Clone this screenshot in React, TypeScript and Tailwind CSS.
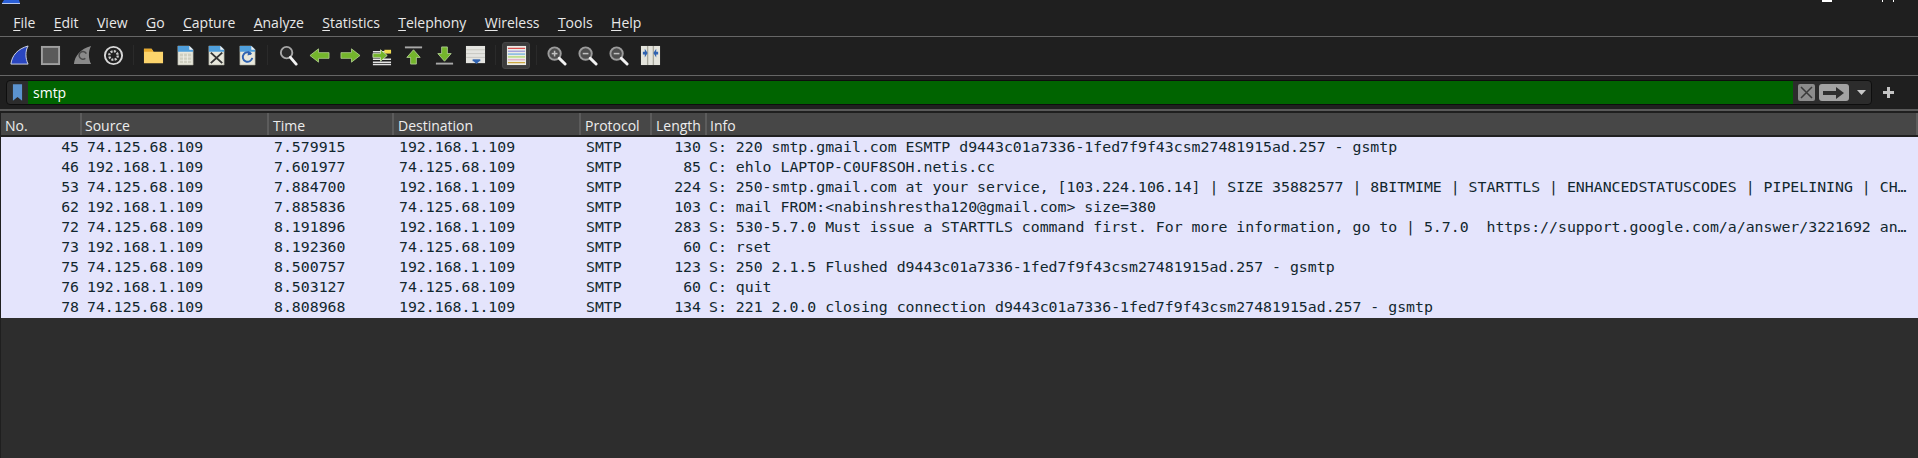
import React from 'react';

const sans = "font-['Open_Sans','Noto_Sans',sans-serif]";
const mono = "font-['DejaVu_Sans_Mono',monospace]";

interface Packet {
  no: number;
  source: string;
  time: string;
  destination: string;
  length: number;
  info: string;
}

const packets: Packet[] = [
  { no: 45, source: '74.125.68.109', time: '7.579915', destination: '192.168.1.109', length: 130, info: 'S: 220 smtp.gmail.com ESMTP d9443c01a7336-1fed7f9f43csm27481915ad.257 - gsmtp' },
  { no: 46, source: '192.168.1.109', time: '7.601977', destination: '74.125.68.109', length: 85, info: 'C: ehlo LAPTOP-C0UF8SOH.netis.cc' },
  { no: 53, source: '74.125.68.109', time: '7.884700', destination: '192.168.1.109', length: 224, info: 'S: 250-smtp.gmail.com at your service, [103.224.106.14] | SIZE 35882577 | 8BITMIME | STARTTLS | ENHANCEDSTATUSCODES | PIPELINING | CH…' },
  { no: 62, source: '192.168.1.109', time: '7.885836', destination: '74.125.68.109', length: 103, info: 'C: mail FROM:<nabinshrestha120@gmail.com> size=380' },
  { no: 72, source: '74.125.68.109', time: '8.191896', destination: '192.168.1.109', length: 283, info: 'S: 530-5.7.0 Must issue a STARTTLS command first. For more information, go to | 5.7.0  https://support.google.com/a/answer/3221692 an…' },
  { no: 73, source: '192.168.1.109', time: '8.192360', destination: '74.125.68.109', length: 60, info: 'C: rset' },
  { no: 75, source: '74.125.68.109', time: '8.500757', destination: '192.168.1.109', length: 123, info: 'S: 250 2.1.5 Flushed d9443c01a7336-1fed7f9f43csm27481915ad.257 - gsmtp' },
  { no: 76, source: '192.168.1.109', time: '8.503127', destination: '74.125.68.109', length: 60, info: 'C: quit' },
  { no: 78, source: '74.125.68.109', time: '8.808968', destination: '192.168.1.109', length: 134, info: 'S: 221 2.0.0 closing connection d9443c01a7336-1fed7f9f43csm27481915ad.257 - gsmtp' },
];

const MenuItem: React.FC<{ hot: string; rest: string }> = ({ hot, rest }) => (
  <span className="px-[9.2px] whitespace-pre">
    <span className="underline underline-offset-2">{hot}</span>
    {rest}
  </span>
);

const Icon: React.FC<{ children: React.ReactNode; active?: boolean }> = ({ children, active }) => (
  <div className="flex w-[31.3px] shrink-0 justify-center">
    <div
      className={`flex h-[27px] w-[28px] items-center justify-center rounded-[3px] ${
        active ? 'border border-[#474747] bg-[#3c3c3c]' : ''
      }`}
    >
      <svg width="21" height="21" viewBox="0 0 22 22">
        {children}
      </svg>
    </div>
  </div>
);

const Sep = () => (
  <div className="flex w-[9px] shrink-0 justify-center">
    <div className="h-[20px] w-px bg-[#2a2a2a]" />
  </div>
);

const Sheet: React.FC<{ children?: React.ReactNode }> = ({ children }) => (
  <>
    <path d="M3 1h12l4 4v16H3z" fill="#e8e8dc" stroke="#9a9a90" strokeWidth="0.6" />
    <path d="M3 1h12l4 4v2H3z" fill="#4f9fdc" />
    <path d="M15 1l4 4h-4z" fill="#f2f2f2" />
    {children}
  </>
);

const Magnifier: React.FC<{ sign?: 'plus' | 'minus' }> = ({ sign }) => (
  <>
    <circle cx="9" cy="9" r="6.5" fill="#4e4e4e" stroke="#9c9c9c" strokeWidth="2" />
    <path d="M14 14l6 6" stroke="#f2f2f2" strokeWidth="3" strokeLinecap="round" />
    {sign && <path d="M6 9h6" stroke="#c0c0c0" strokeWidth="1.6" />}
    {sign === 'plus' && <path d="M9 6v6" stroke="#c0c0c0" strokeWidth="1.6" />}
  </>
);

const Toolbar = () => (
  <div className="flex h-[38px] items-center pb-[2px] pl-[4px]">
    <Icon>
      <path d="M2 20C3 11 9 4 20 1c-3 5-3 13 0 19z" fill="#2a46c0" stroke="#d5d9e8" strokeWidth="1" />
    </Icon>
    <Icon>
      <rect x="2" y="2" width="18" height="18" fill="#5a5a5a" stroke="#a0a0a0" strokeWidth="2" />
    </Icon>
    <Icon>
      <path d="M2 20C3 11 9 4 20 1c-3 5-3 13 0 19z" fill="#8a8a8a" />
      <path d="M15 9a4 4 0 1 0-1 5" fill="none" stroke="#4a4a4a" strokeWidth="1.6" />
    </Icon>
    <Icon>
      <circle cx="11" cy="11" r="9" fill="none" stroke="#d8d8d8" strokeWidth="2" />
      <circle cx="11" cy="11" r="4.5" fill="none" stroke="#c8c8c8" strokeWidth="2.4" strokeDasharray="2.2 1.3" />
    </Icon>
    <Sep />
    <Icon>
      <path d="M1 4h8l2 3h10v12H1z" fill="#fcd46c" />
      <path d="M1 4h8l2 3H1z" fill="#e8a92c" />
    </Icon>
    <Icon>
      <Sheet>
        <path d="M5 9h12v10H5z" fill="#cfcfc0" />
        <path d="M9 9v10M13 9v10M5 12.5h12M5 16h12" stroke="#f2f2e8" strokeWidth="0.8" />
      </Sheet>
    </Icon>
    <Icon>
      <Sheet>
        <path d="M5 8l12 11M17 8L5 19" stroke="#333" strokeWidth="2" />
      </Sheet>
    </Icon>
    <Icon>
      <Sheet>
        <path d="M15 9.5a5 5 0 1 0 1 4" fill="none" stroke="#2f62b0" strokeWidth="2" />
        <path d="M12 6l3 4-4 1z" fill="#2f62b0" />
      </Sheet>
    </Icon>
    <Sep />
    <Icon>
      <circle cx="9" cy="8" r="6" fill="#2a2a2a" stroke="#a8a8a8" strokeWidth="2" />
      <path d="M13 13l6 7" stroke="#f2f2f2" strokeWidth="3" strokeLinecap="round" />
    </Icon>
    <Icon>
      <path d="M1 11l9-7v4h11v6H10v4z" fill="#74b52c" stroke="#b9d894" strokeWidth="0.8" />
    </Icon>
    <Icon>
      <path d="M21 11l-9-7v4H1v6h11v4z" fill="#74b52c" stroke="#b9d894" strokeWidth="0.8" />
    </Icon>
    <Icon>
      <path d="M2 7h19M2 15h19M2 18h19M2 20.5h19" stroke="#e4e4e4" strokeWidth="1.6" />
      <rect x="14" y="5" width="7" height="4" fill="#f0dc50" />
      <path d="M2 9h8V5l7 6-7 6v-4H2z" fill="#74b52c" stroke="#d8e8c4" strokeWidth="0.8" />
    </Icon>
    <Icon>
      <path d="M2 2.5h18" stroke="#a8a8a8" strokeWidth="2" />
      <path d="M11 5l7 8h-4v7H8v-7H4z" fill="#74b52c" stroke="#c0dca0" strokeWidth="0.8" />
    </Icon>
    <Icon>
      <path d="M2 19.5h18" stroke="#a8a8a8" strokeWidth="2" />
      <path d="M11 17l7-8h-4V2H8v7H4z" fill="#74b52c" stroke="#c0dca0" strokeWidth="0.8" />
    </Icon>
    <Icon>
      <path d="M1 1h20v18H1z" fill="#e4e4e0" />
      <path d="M1 5h20M1 9h20M1 13h20" stroke="#c0c0b8" strokeWidth="0.8" />
      <path d="M8 16h8l-4 4z" fill="#2f62b0" />
      <rect x="8" y="15" width="8" height="2" fill="#2f62b0" />
    </Icon>
    <Sep />
    <Icon active>
      <rect x="1" y="1" width="20" height="20" fill="#ecece6" />
      <path d="M2 3.5h18" stroke="#d84040" strokeWidth="1.2" />
      <path d="M2 6.5h18" stroke="#9090d8" strokeWidth="1.2" />
      <path d="M2 9.5h18" stroke="#60a8e0" strokeWidth="1.2" />
      <path d="M2 12.5h18" stroke="#a8d860" strokeWidth="1.2" />
      <path d="M2 15.5h18" stroke="#e0a0c0" strokeWidth="1.2" />
      <path d="M2 18.5h18" stroke="#c8a030" strokeWidth="1.2" />
    </Icon>
    <Sep />
    <Icon>
      <Magnifier sign="plus" />
    </Icon>
    <Icon>
      <Magnifier sign="minus" />
    </Icon>
    <Icon>
      <Magnifier sign="minus" />
    </Icon>
    <Icon>
      <rect x="1" y="1" width="20" height="20" fill="#e4e4dc" />
      <path d="M8 1v20M14 1v20" stroke="#a8a89c" strokeWidth="1.4" />
      <path d="M3 7h2V4l3 4.5L5 13V10H3zM19 7h-2V4l-3 4.5 3 4.5v-3h2z" fill="#2f62b0" />
    </Icon>
  </div>
);

const FilterBar = () => (
  <div className="flex h-[33px] items-center pr-[24px] pl-[6px]">
    <div className="flex h-[25px] flex-1 overflow-hidden rounded-[4px] border border-[#0e0e0e] bg-[#2c2c2c]">
      <div className="flex w-[21px] shrink-0 items-center justify-center">
        <svg width="11" height="17" viewBox="0 0 12 18">
          <path d="M1 0h10v18l-5-4-5 4z" fill="#5b93cf" />
        </svg>
      </div>
      <div className={`flex-1 bg-[#006400] pl-[5px] text-[14px] leading-[23px] text-white ${sans}`}>smtp</div>
      <div className="flex w-[78px] shrink-0 items-center pl-[5px]">
        <div className="flex h-[17px] w-[17px] items-center justify-center rounded-[2px] bg-[#8c8c8c]">
          <svg width="13" height="13" viewBox="0 0 13 13">
            <path d="M1 1l11 11M12 1L1 12" stroke="#3a3a3a" strokeWidth="1.5" />
          </svg>
        </div>
        <div className="ml-[4px] flex h-[17px] w-[30px] items-center justify-center rounded-[3px] bg-[#a2a2a2]">
          <svg width="22" height="12" viewBox="0 0 22 12">
            <path d="M0 4h13V0l8 6-8 6V8H0z" fill="#2e2e2e" />
          </svg>
        </div>
        <svg className="ml-[8px]" width="9" height="5" viewBox="0 0 9 5">
          <path d="M0 0h9L4.5 5z" fill="#c8c8c8" />
        </svg>
      </div>
    </div>
    <svg className="ml-[11px]" width="11" height="11" viewBox="0 0 11 11">
      <path d="M4 0h3v4h4v3H7v4H4V7H0V4h4z" fill="#c4c4c4" />
    </svg>
  </div>
);

const headers = [
  { label: 'No.', width: 'w-[81px]', pad: 'pl-[4px]' },
  { label: 'Source', width: 'w-[187px]', pad: 'pl-[3px]' },
  { label: 'Time', width: 'w-[125px]', pad: 'pl-[4px]' },
  { label: 'Destination', width: 'w-[187px]', pad: 'pl-[4px]' },
  { label: 'Protocol', width: 'w-[71px]', pad: 'pl-[4px]' },
  { label: 'Length', width: 'w-[55px]', pad: 'pl-[4px]' },
  { label: 'Info', width: 'flex-1', pad: 'pl-[3px]' },
];

const PacketHeader = () => (
  <div className={`flex h-[24px] border-b-2 border-[#202020] bg-[#474747] text-[14px] leading-[25px] text-[#ededed] ${sans}`}>
    {headers.map((h) => (
      <div key={h.label} className={`${h.width} ${h.pad} border-r-2 border-[#5c5c5c] whitespace-nowrap`}>
        {h.label}
      </div>
    ))}
  </div>
);

const PacketRow: React.FC<{ packet: Packet }> = ({ packet }) => (
  <div className={`flex h-[20px] text-[14.85px] leading-[20px] whitespace-pre text-[#12272e] ${mono}`}>
    <div className="w-[78px] text-right">{packet.no}</div>
    <div className="w-[188px] pl-[8px]">{packet.source}</div>
    <div className="w-[125px] pl-[7px]">{packet.time}</div>
    <div className="w-[187px] pl-[7px]">{packet.destination}</div>
    <div className="w-[71px] pl-[7px]">SMTP</div>
    <div className="w-[51px] text-right">{packet.length}</div>
    <div className="min-w-0 flex-1 overflow-hidden pl-[8px]">{packet.info}</div>
  </div>
);

export default function App() {
  return (
    <div className="flex h-[458px] w-[1918px] flex-col overflow-hidden bg-[#1f1f1f]">
      <div className="flex h-[37px] shrink-0 flex-col border-b border-[#666666]">
        <div className={`flex h-[10px] shrink-0 items-start overflow-hidden text-[14px] leading-[14px] text-white ${sans}`}>
          <svg className="ml-[2px] shrink-0" width="18" height="4" viewBox="0 0 18 4">
            <path d="M2 0h15l1 3H0z" fill="#2a5fd8" />
            <path d="M0 3h18v1H0z" fill="#b8c8ec" />
          </svg>
          <span className="mt-[-12px] ml-[17px]">Wi-Fi</span>
          <div className="mt-0 ml-auto h-[2px] w-[10px] bg-white" />
          <div className="ml-[50px] flex w-[12px] justify-between">
            <div className="h-[2px] w-px bg-white" />
            <div className="h-[2px] w-px bg-white" />
          </div>
          <div className="w-[24px] shrink-0" />
        </div>
        <div className={`flex h-[26px] items-center pb-[1px] pl-[4px] text-[14px] text-[#e8e8e8] ${sans}`}>
          <MenuItem hot="F" rest="ile" />
          <MenuItem hot="E" rest="dit" />
          <MenuItem hot="V" rest="iew" />
          <MenuItem hot="G" rest="o" />
          <MenuItem hot="C" rest="apture" />
          <MenuItem hot="A" rest="nalyze" />
          <MenuItem hot="S" rest="tatistics" />
          <MenuItem hot="T" rest="elephony" />
          <MenuItem hot="W" rest="ireless" />
          <MenuItem hot="T" rest="ools" />
          <MenuItem hot="H" rest="elp" />
        </div>
      </div>
      <div className="border-b border-[#666666]">
        <Toolbar />
      </div>
      <FilterBar />
      <div className="h-[2px] shrink-0 bg-[#5a5a5a]" />
      <div className="h-[2px] shrink-0 bg-[#1f1f1f]" />
      <div className="flex-1 border-l border-[#1f1f1f] bg-[#2d2d2d]">
        <PacketHeader />
        <div className="bg-[#e4e4fc] pb-[1px]">
          {packets.map((p) => (
            <PacketRow key={p.no} packet={p} />
          ))}
        </div>
      </div>
    </div>
  );
}
